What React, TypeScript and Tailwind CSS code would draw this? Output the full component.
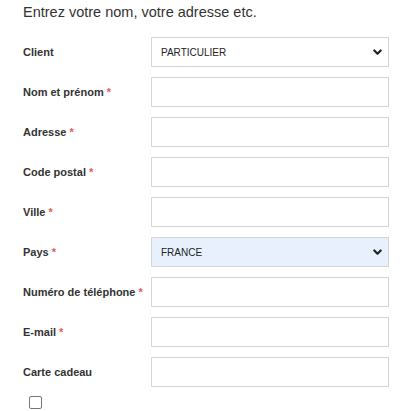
import React from 'react';

const fields: { label: string; required?: boolean; kind: 'select' | 'input'; value?: string; filled?: boolean }[] = [
  { label: 'Client', kind: 'select', value: 'PARTICULIER' },
  { label: 'Nom et prénom', required: true, kind: 'input' },
  { label: 'Adresse', required: true, kind: 'input' },
  { label: 'Code postal', required: true, kind: 'input' },
  { label: 'Ville', required: true, kind: 'input' },
  { label: 'Pays', required: true, kind: 'select', value: 'FRANCE', filled: true },
  { label: 'Numéro de téléphone', required: true, kind: 'input' },
  { label: 'E-mail', required: true, kind: 'input' },
  { label: 'Carte cadeau', kind: 'input' },
];

function Chevron() {
  return (
    <svg width="9" height="7" viewBox="0 0 9 7" className="shrink-0">
      <polyline points="1.3,1.5 4.5,4.7 7.7,1.5" fill="none" stroke="#222" strokeWidth="2.2" strokeLinecap="round" strokeLinejoin="round" />
    </svg>
  );
}

export default function App() {
  return (
    <div className="w-[409px] h-[411px] bg-white overflow-hidden pl-[23px] pt-[2px] text-[#333]" style={{ fontFamily: '"Liberation Sans", Arial, sans-serif' }}>
      <p className="h-[20px] leading-[20px] text-[14.5px] text-[#333]">Entrez votre nom, votre adresse etc.</p>

      <div className="mt-[15px] flex flex-col gap-[10px]">
        {fields.map((f) => (
          <div key={f.label} className="flex items-center">
            <label className="w-[128px] shrink-0 text-[11px] font-bold text-[#333]">
              {f.label}
              {f.required && <span className="text-[#e05a5a] ml-[3px]">*</span>}
            </label>
            {f.kind === 'select' ? (
              <div className={`w-[238px] h-[30px] border border-[#d4d4d4] flex items-center justify-between pl-[9px] pr-[6px] ${f.filled ? 'bg-[#e8f0fe]' : 'bg-white'}`}>
                <span className="text-[10px] text-[#222]">{f.value}</span>
                <Chevron />
              </div>
            ) : (
              <input className="w-[238px] h-[30px] border border-[#d4d4d4] bg-white outline-none" />
            )}
          </div>
        ))}
      </div>

      <div className="mt-[9px] ml-[6px] w-[13px] h-[13px] border border-[#767676] rounded-[2px] bg-white" />
    </div>
  );
}
